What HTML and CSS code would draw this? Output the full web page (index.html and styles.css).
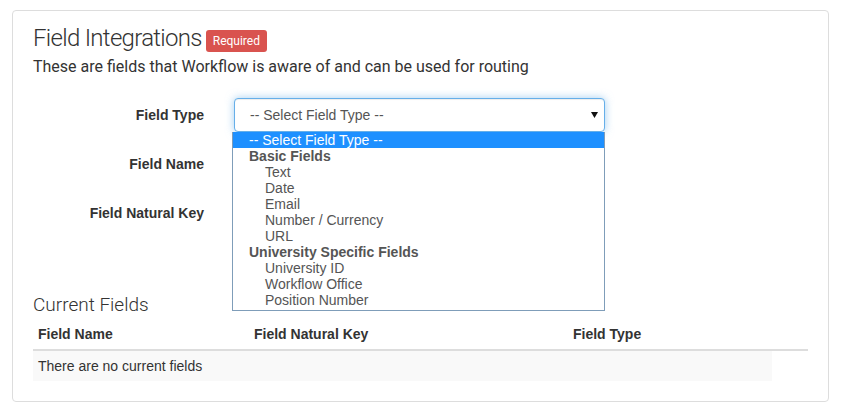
FILE: index.html
```html
<!DOCTYPE html>
<html>
<head>
<meta charset="utf-8">
<link rel="stylesheet" href="styles.css">
</head>
<body>
<div class="panel">
  <h3 class="title">Field Integrations <span class="badge">Required</span></h3>
  <p class="lead">These are fields that Workflow is aware of and can be used for routing</p>

  <div class="form">
    <div class="row">
      <label class="lbl">Field Type</label>
      <div class="ctl">
        <div class="select">
          <span>-- Select Field Type --</span>
          <svg class="caret" width="7" height="6" viewBox="0 0 7 6"><path d="M0 0H7L3.5 6Z" fill="#111"/></svg>
        </div>
        <div class="dropdown">
          <div class="opt sel">-- Select Field Type --</div>
          <div class="grp">Basic Fields</div>
          <div class="opt sub">Text</div>
          <div class="opt sub">Date</div>
          <div class="opt sub">Email</div>
          <div class="opt sub">Number / Currency</div>
          <div class="opt sub">URL</div>
          <div class="grp">University Specific Fields</div>
          <div class="opt sub">University ID</div>
          <div class="opt sub">Workflow Office</div>
          <div class="opt sub">Position Number</div>
        </div>
      </div>
    </div>
    <div class="row">
      <label class="lbl">Field Name</label>
      <div class="ctl"><div class="input"></div></div>
    </div>
    <div class="row">
      <label class="lbl">Field Natural Key</label>
      <div class="ctl"><div class="input"></div></div>
    </div>
  </div>

  <h4 class="subtitle">Current Fields</h4>
  <div class="table">
    <div class="thead">
      <div class="th">Field Name</div>
      <div class="th">Field Natural Key</div>
      <div class="th">Field Type</div>
    </div>
    <div class="empty">There are no current fields</div>
  </div>
</div>
</body>
</html>
```
FILE: styles.css
```css
* { box-sizing: border-box; }
html, body { margin: 0; padding: 0; background: #fff; }
body {
  font-family: Roboto, "Liberation Sans", Arial, sans-serif;
  color: #333;
  font-size: 14px;
  padding: 10px 13px 0 12px;
}
.panel {
  border: 1px solid #ddd;
  border-radius: 4px;
  padding: 13px 20px 19px 20px;
  height: 392px;
}
.title {
  margin: 0;
  font-size: 24px;
  font-weight: 300;
  line-height: 28px;
  letter-spacing: -0.7px;
  display: flex;
  align-items: center;
  gap: 4px;
}
.badge {
  display: inline-block;
  background: #d9534f;
  color: #fff;
  font-size: 12px;
  font-weight: 400;
  letter-spacing: 0;
  line-height: 22px;
  height: 22px;
  padding: 0 7px;
  border-radius: 3px;
  margin-top: 5px;
}
.lead {
  margin: 4px 0 0 0;
  font-size: 16px;
  line-height: 22px;
  color: #333;
}
.form {
  margin-top: 20px;
  display: flex;
  flex-direction: column;
  gap: 15px;
}
.row {
  display: grid;
  grid-template-columns: 171px 371px;
  column-gap: 30px;
  align-items: center;
  height: 34px;
}
.lbl {
  text-align: right;
  font-family: "Liberation Sans", Arial, sans-serif;
  font-weight: bold;
  font-size: 14px;
  color: #333;
}
.ctl { position: relative; height: 34px; }
.select {
  height: 34px;
  border: 1px solid #66afe9;
  border-radius: 4px;
  box-shadow: inset 0 1px 1px rgba(0,0,0,.075), 0 0 8px rgba(102,175,233,.6);
  display: flex;
  align-items: center;
  justify-content: space-between;
  padding: 0 6px 0 15px;
  font-family: "Liberation Sans", Arial, sans-serif;
  font-size: 14px;
  color: #555;
  background: #fff;
}
.caret { margin-top: -1px; }
.input {
  height: 34px;
  border: 1px solid #ccc;
  border-radius: 4px;
  box-shadow: inset 0 1px 1px rgba(0,0,0,.075);
  background: #fff;
}
.dropdown {
  position: absolute;
  left: -2px;
  top: 34px;
  width: 373px;
  background: #fff;
  border: 1px solid #7f9db9;
  border-top: none;
  z-index: 5;
  font-family: "Liberation Sans", Arial, sans-serif;
  font-size: 14px;
  color: #555;
  padding-bottom: 2px;
}
.opt, .grp {
  height: 16px;
  line-height: 16px;
  white-space: nowrap;
}
.opt { padding-left: 16px; }
.opt.sel { background: #1e90ff; color: #fff; }
.grp { font-weight: bold; padding-left: 16px; }
.opt.sub { padding-left: 32px; }
.subtitle {
  margin: 64px 0 0 0;
  font-size: 19px;
  font-weight: 300;
  line-height: 22px;
  color: #333;
}
.table {
  margin-top: 0;
  width: 775px;
  font-family: "Liberation Sans", Arial, sans-serif;
}
.thead {
  display: grid;
  grid-template-columns: 216px 319px 240px;
  border-bottom: 2px solid #ddd;
}
.th {
  padding: 8px 5px 5px 5px;
  font-weight: bold;
  font-size: 14px;
  line-height: 20px;
}
.empty {
  width: 739px;
  background: #f9f9f9;
  padding: 5px 5px;
  font-size: 14px;
  line-height: 20px;
}
```
